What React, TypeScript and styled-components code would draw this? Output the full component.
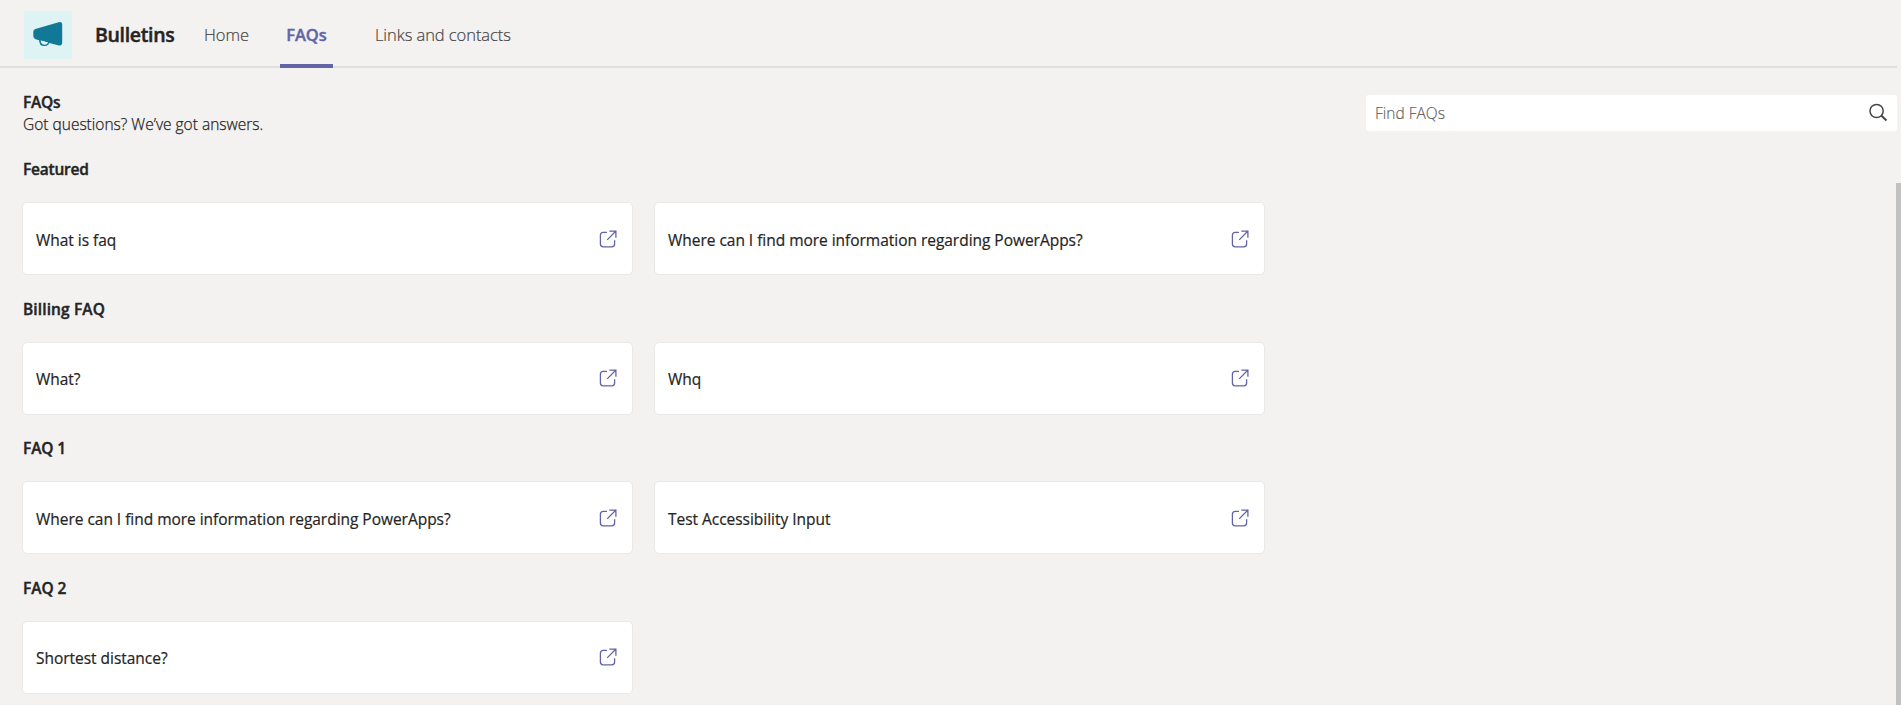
import React from "react";
import styled, { createGlobalStyle } from "styled-components";

const GlobalStyle = createGlobalStyle`
  * { box-sizing: border-box; }
  body {
    margin: 0;
    background: #f3f2f1;
    color: #252423;
    font-family: "Segoe UI", "Open Sans", "Noto Sans", sans-serif;
    overflow: hidden;
  }
`;

const Page = styled.div`
  display: flex;
  flex-direction: column;
  height: 705px;
  overflow: hidden;
`;

const Header = styled.header`
  display: flex;
  align-items: stretch;
  height: 68px;
  margin-right: 4px;
  padding-left: 24px;
  box-shadow: inset 0 -2px 0 #e1dfdd;
`;

const Logo = styled.div`
  width: 48px;
  height: 48px;
  margin-top: 11px;
  background: #def4f4;
`;

const Title = styled.h1`
  width: 108px;
  margin: 0 0 0 22px;
  padding-left: 1px;
  font-size: 19.5px;
  font-weight: 600;
  line-height: 70px;
  white-space: nowrap;
  letter-spacing: -0.33px;
  -webkit-text-stroke: 0.45px;
`;

const Nav = styled.nav`
  display: flex;
`;

const Tab = styled.a<{ $active?: boolean; $gap?: number }>`
  min-width: ${(p) => (p.$active ? "53px" : "0")};
  margin-left: ${(p) => p.$gap ?? 0}px;
  text-align: center;
  font-size: 16.5px;
  line-height: 70px;
  white-space: nowrap;
  letter-spacing: -0.06px;
  font-weight: ${(p) => (p.$active ? 600 : 300)};
  color: ${(p) => (p.$active ? "#6264a7" : "#484644")};
  box-shadow: ${(p) => (p.$active ? "inset 0 -4px 0 #6264a7" : "none")};
  -webkit-text-stroke: ${(p) => (p.$active ? 0.4 : 0.2)}px;
`;

const Intro = styled.section`
  display: flex;
  justify-content: space-between;
  height: 90px;
  padding: 23px 4px 0 23px;
`;

const Heading = styled.h2<{ $track?: number }>`
  margin: 0;
  font-size: 15.5px;
  font-weight: 600;
  line-height: 22px;
  letter-spacing: ${(p) => p.$track ?? 0}px;
  -webkit-text-stroke: 0.4px;
`;

const Lead = styled.p`
  margin: 0;
  font-size: 15.5px;
  font-weight: 300;
  line-height: 22px;
  -webkit-text-stroke: 0.25px;
`;

const Search = styled.div`
  display: flex;
  align-items: center;
  justify-content: space-between;
  width: 531px;
  height: 36px;
  margin-top: 4px;
  padding: 0 9px;
  border-radius: 3px;
  background: #fff;
  color: #605e5c;
  font-size: 15.5px;
  font-weight: 300;
  -webkit-text-stroke: 0.15px;
`;

const Body = styled.div`
  display: flex;
  flex: 1;
  min-height: 0;
`;

const List = styled.main`
  flex: 1;
  padding-left: 22px;
`;

const Group = styled.section`
  height: 139.6px;
`;

const GroupTitle = styled(Heading)`
  height: 44px;
  padding-left: 1px;
`;

const Cards = styled.div`
  display: flex;
  gap: 21px;
`;

const Card = styled.article`
  display: flex;
  align-items: center;
  justify-content: space-between;
  width: 611px;
  height: 73px;
  padding: 0 15px 0 13px;
  border: 1px solid #e9e8e7;
  border-radius: 5px;
  background: #fff;
`;

const Question = styled.span`
  padding-top: 2px;
  font-size: 15.5px;
  letter-spacing: -0.03px;
  -webkit-text-stroke: 0.2px;
`;

const Scrollbar = styled.div`
  width: 5px;
  margin-top: 25px;
  background: #c1c1c1;
`;

const Megaphone = () => (
  <svg width="48" height="48" viewBox="0 0 48 48" fill="none">
    <path
      d="M11.4 18 34.6 11.3Q38.2 10.4 38.2 13.8V31.6Q38.2 35 34.8 34.4L11.6 28.2Q9.3 27.4 9.3 25.1V21Q9.3 18.6 11.4 18Z"
      fill="#127897"
    />
    <path d="M15.8 28.4C15.8 32.4 17.8 34.3 20.4 34.3 22.8 34.3 24.8 32.8 25.2 30" stroke="#127897" strokeWidth="1.6" />
    <path d="M17 29.6C17.3 32 18.5 33.4 20.4 33.4 22.1 33.4 23.3 32.6 23.9 31.4Z" fill="#def4f4" />
  </svg>
);

const OpenIcon = () => (
  <svg width="18" height="18" viewBox="0 0 18 18" fill="none" stroke="#6264a7" strokeWidth="1.3">
    <path d="M8 2.4H4.2Q1.4 2.4 1.4 5.2V14Q1.4 16.8 4.2 16.8H12.8Q15.6 16.8 15.6 14V10.2" />
    <path d="M10.3 1.1H16.9V7.8M16.7 1.3 8.2 9.9" />
  </svg>
);

const SearchIcon = () => (
  <svg width="20" height="20" viewBox="0 0 20 20" fill="none" stroke="#484644" strokeWidth="1.5">
    <circle cx="8.6" cy="8" r="6.6" />
    <path d="M13.2 12.6 18.5 17.6" strokeWidth="2" />
  </svg>
);

const groups: { title: string; track: number; items: string[] }[] = [
  {
    title: "Featured",
    track: -0.22,
    items: ["What is faq", "Where can I find more information regarding PowerApps?"],
  },
  { title: "Billing FAQ", track: 0.12, items: ["What?", "Whq"] },
  {
    title: "FAQ 1",
    track: -0.1,
    items: ["Where can I find more information regarding PowerApps?", "Test Accessibility Input"],
  },
  { title: "FAQ 2", track: -0.05, items: ["Shortest distance?"] },
];

export default function App() {
  return (
    <>
      <GlobalStyle />
      <Page>
        <Header>
          <Logo>
            <Megaphone />
          </Logo>
          <Title>Bulletins</Title>
          <Nav>
            <Tab $gap={2}>Home</Tab>
            <Tab $gap={31} $active>FAQs</Tab>
            <Tab $gap={42}>Links and contacts</Tab>
          </Nav>
        </Header>
        <Intro>
          <div>
            <Heading $track={-0.2}>FAQs</Heading>
            <Lead>Got questions? We’ve got answers.</Lead>
          </div>
          <Search>
            <span>Find FAQs</span>
            <SearchIcon />
          </Search>
        </Intro>
        <Body>
          <List>
            {groups.map((g) => (
              <Group key={g.title}>
                <GroupTitle $track={g.track}>{g.title}</GroupTitle>
                <Cards>
                  {g.items.map((text) => (
                    <Card key={text}>
                      <Question>{text}</Question>
                      <OpenIcon />
                    </Card>
                  ))}
                </Cards>
              </Group>
            ))}
          </List>
          <Scrollbar />
        </Body>
      </Page>
    </>
  );
}
